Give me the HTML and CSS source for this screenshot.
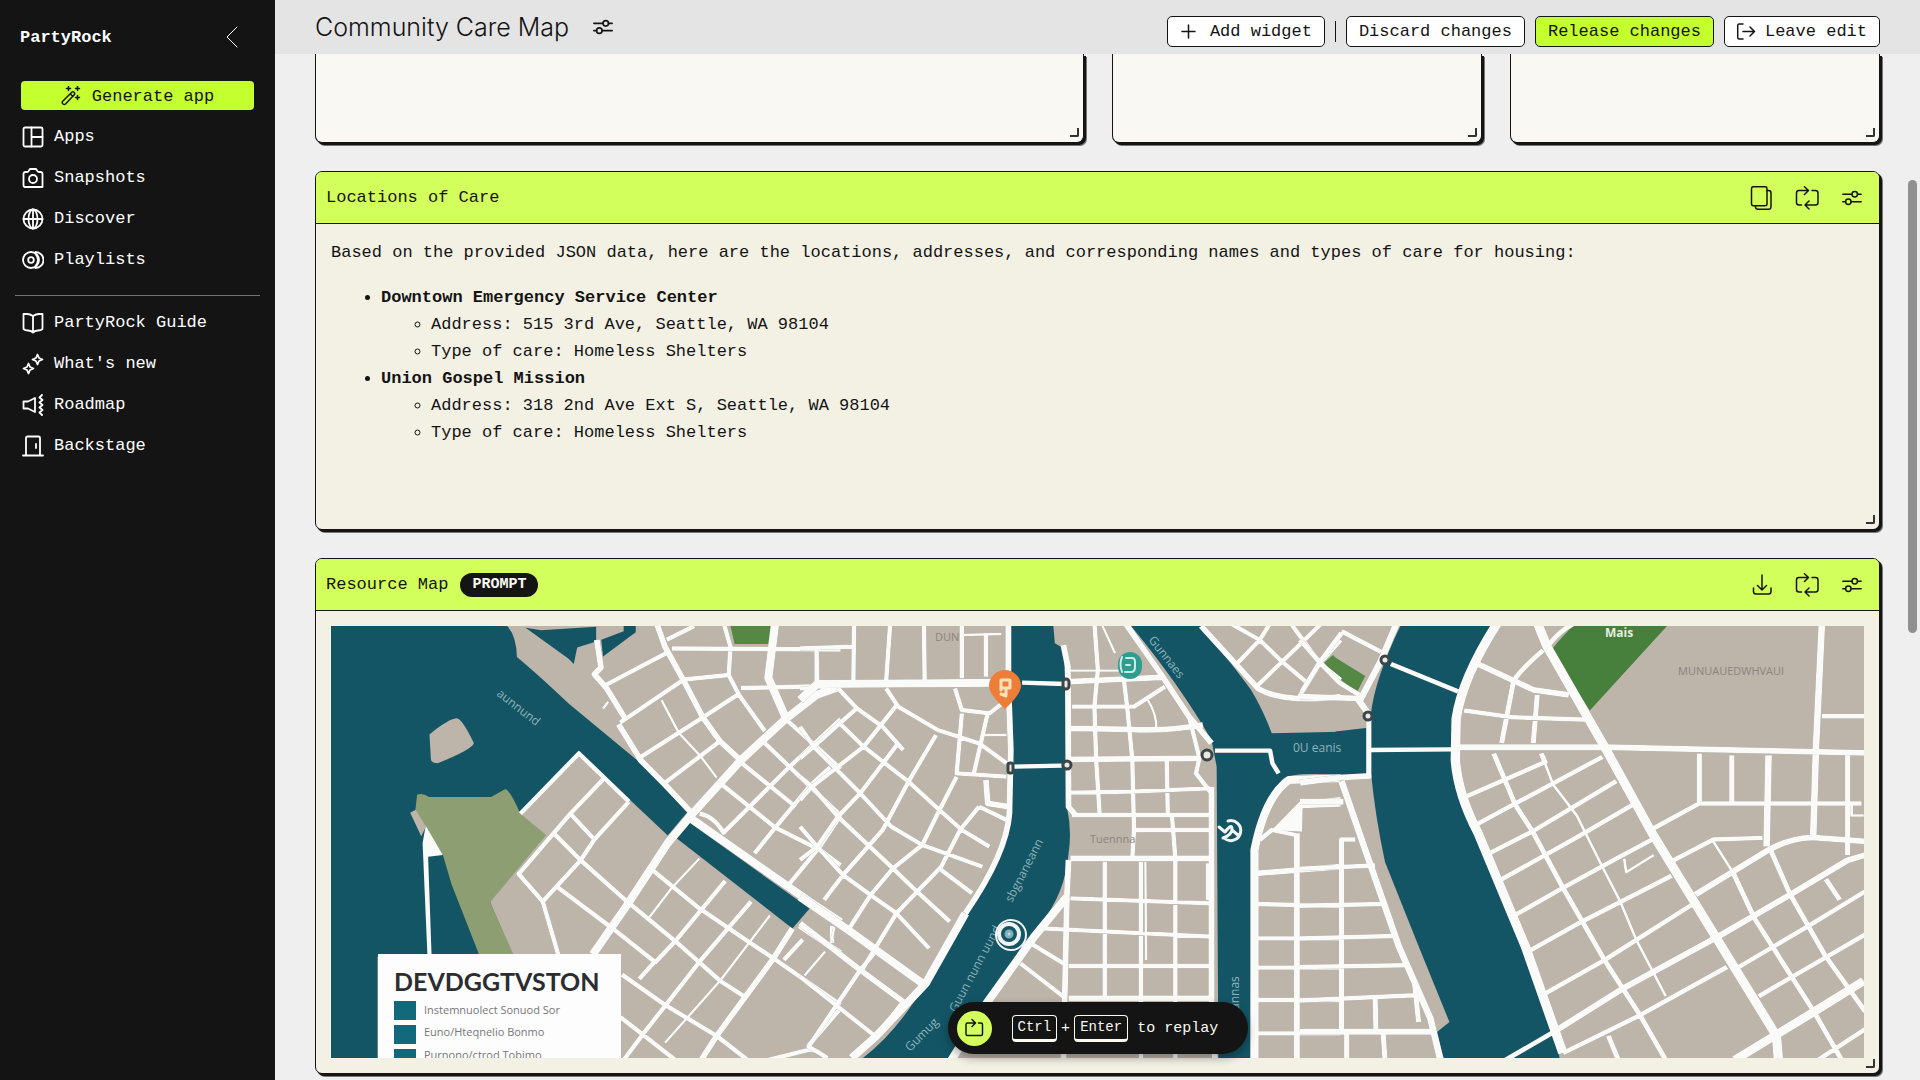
FILE: index.html
```html
<!DOCTYPE html>
<html lang="en">
<head>
<meta charset="utf-8">
<meta name="viewport" content="width=device-width, initial-scale=1">
<title>Community Care Map - PartyRock</title>
<link rel="stylesheet" href="styles.css">
</head>
<body>
<svg class="sprite" aria-hidden="true">
  <symbol id="i-sliders" viewBox="0 0 24 24"><path d="M2 8h10M18 8h4M2 16h3M11 16h11"/><circle cx="15" cy="8" r="3"/><circle cx="8" cy="16" r="3"/></symbol>
  <symbol id="i-replay" viewBox="0 0 24 24"><path d="M13 4.500H4Q1.500 4.500 1.500 7V16.500Q1.500 19 4 19H6.500M17 4.500H20.500Q23 4.500 23 7V16.500Q23 19 20.500 19H11M9.500 .7L13.500 4.500L9.500 8.500M14 15L10 19L14 23"/></symbol>
</svg>
<div class="app">
  <aside class="sidebar">
    <div class="brand">
      <span class="logo">PartyRock</span>
      <button class="icon-button" aria-label="Collapse sidebar"><svg class="chevron" viewBox="0 0 12 22"><path d="M11 1L1 11L11 21"/></svg></button>
    </div>
    <button class="generate">
      <svg class="icon-m" viewBox="0 0 20 20"><path d="M1.500 15.500L11 6Q12 5.300 13 6.200T13.500 8.500L4.500 18Q3.300 19 2 18T1.500 15.500ZM9.500 8L12 10.500M7.500 .5v4M5.500 2.500h4M16.500 .5v4M14.500 2.500h4M16.500 9.500v4M14.500 11.500h4"/></svg>
      Generate app
    </button>
    <nav aria-label="Main">
      <ul class="nav">
        <li><a href="#"><svg class="icon-l" viewBox="0 0 22 22"><rect x="1.500" y="1.500" width="19" height="19" rx="1.500"/><path d="M9.500 1.500v19M9.500 11h11"/></svg>Apps</a></li>
        <li><a href="#"><svg class="icon-l" viewBox="0 0 22 22"><path d="M1.500 7Q1.500 5 3.500 5H5Q6.500 5 7 3.500T8.500 2H13.500Q14.500 2 15 3.500T17 5H18.500Q20.500 5 20.500 7V20H3Q1.500 20 1.500 18Z"/><circle cx="11" cy="12" r="4"/></svg>Snapshots</a></li>
        <li><a href="#"><svg class="icon-l" viewBox="0 0 22 22"><circle cx="11" cy="11" r="9.500"/><ellipse cx="11" cy="11" rx="4.500" ry="9.500"/><path d="M11 1.500v19M1.500 11h19"/></svg>Discover</a></li>
        <li><a href="#"><svg class="icon-l" viewBox="0 0 22 22"><circle cx="9" cy="11" r="8"/><circle cx="9" cy="11" r="2.800"/><path d="M13.500 3a8 8 0 0 1 0 16M13.500 5Q18.500 11 13.500 17"/></svg>Playlists</a></li>
      </ul>
      <hr>
      <ul class="nav">
        <li><a href="#"><svg class="icon-l" viewBox="0 0 22 22"><path d="M11 4Q8 2 5 2H1.500V17Q3 18.500 6 18.500T11 20.500Q13 18.500 16 18.500T20.500 17V2H17Q14 2 11 4V20"/></svg>PartyRock Guide</a></li>
        <li><a href="#"><svg class="icon-l" viewBox="0 0 22 22"><path d="M15.500 1.500L17 5L20.500 6.500L17 8L15.500 11.500L14 8L10.500 6.500L14 5ZM6.500 10.500L8 14L11.500 15.500L8 17L6.500 20.500L5 17L1.500 15.500L5 14Z"/></svg>What's new</a></li>
        <li><a href="#"><svg class="icon-l" viewBox="0 0 22 22"><path d="M1.500 7.500H6L13 4V18L6 14.500H1.500ZM20 1L17.500 3.500L20.500 6L17.500 8.500L20.500 11L17.500 13.500L20.500 16L17.500 18.500L20 21"/></svg>Roadmap</a></li>
        <li><a href="#"><svg class="icon-l" viewBox="0 0 22 22"><path d="M4 20.500V3Q4 1.500 5.500 1.500H16.500Q18 1.500 18 3V20.500M1 20.500h20M14 9v4"/></svg>Backstage</a></li>
      </ul>
    </nav>
  </aside>

  <div class="content">
    <header class="topbar">
      <div class="title">
        <h1>Community Care Map</h1>
        <button class="icon-button" aria-label="App settings"><svg class="icon-l"><use href="#i-sliders"/></svg></button>
      </div>
      <div class="actions">
        <button class="btn btn-add"><svg class="icon-m" viewBox="0 0 20 20"><path d="M2 9.500h13M8.500 3v13"/></svg>Add widget</button>
        <span class="divider"></span>
        <button class="btn">Discard changes</button>
        <button class="btn btn-primary">Release changes</button>
        <button class="btn"><svg class="icon-m" viewBox="0 0 20 20"><path d="M6 2H2Q0.700 2 .7 4V15Q.7 17 2 17H6M6 9.500h11.500M13 5L17.500 9.500L13 14"/></svg>Leave edit</button>
      </div>
    </header>

    <main class="board">
      <section class="card card-plain card-wide" aria-label="Widget"><span class="grip"></span></section>
      <section class="card card-plain" aria-label="Widget"><span class="grip"></span></section>
      <section class="card card-plain" aria-label="Widget"><span class="grip"></span></section>

      <section class="card card-full card-text">
        <div class="card-head">
          <h2>Locations of Care</h2>
          <div class="tools">
            <button class="icon-button" aria-label="Copy"><svg class="icon-xl" viewBox="0 0 24 24"><rect x="1.500" y=".7" width="15.500" height="19" rx="2"/><path d="M17 4.500H18.500Q21 4.500 21 7V21Q21 23.300 18.500 23.300H8Q5.500 23.300 5.500 21V19.700"/></svg></button>
            <button class="icon-button" aria-label="Replay"><svg class="icon-xl"><use href="#i-replay"/></svg></button>
            <button class="icon-button" aria-label="Edit widget"><svg class="icon-l icon-fine"><use href="#i-sliders"/></svg></button>
          </div>
        </div>
        <div class="card-body">
          <p>Based on the provided JSON data, here are the locations, addresses, and corresponding names and types of care for housing:</p>
          <ul>
            <li><strong>Downtown Emergency Service Center</strong>
              <ul><li>Address: 515 3rd Ave, Seattle, WA 98104</li><li>Type of care: Homeless Shelters</li></ul>
            </li>
            <li><strong>Union Gospel Mission</strong>
              <ul><li>Address: 318 2nd Ave Ext S, Seattle, WA 98104</li><li>Type of care: Homeless Shelters</li></ul>
            </li>
          </ul>
        </div>
        <span class="grip"></span>
      </section>

      <section class="card card-full">
        <div class="card-head">
          <h2>Resource Map</h2><span class="badge">PROMPT</span>
          <div class="tools">
            <button class="icon-button" aria-label="Download"><svg class="icon-xl" viewBox="0 0 24 24"><path d="M12 2v15M7.500 12.500L12 17L16.500 12.500M3.500 15V18.500Q3.500 21 6 21H18.500Q21 21 21 18.500V15"/></svg></button>
            <button class="icon-button" aria-label="Replay"><svg class="icon-xl"><use href="#i-replay"/></svg></button>
            <button class="icon-button" aria-label="Edit widget"><svg class="icon-l icon-fine"><use href="#i-sliders"/></svg></button>
          </div>
        </div>
        <div class="card-body">
          <svg class="map" viewBox="331 626 1533 432" preserveAspectRatio="xMidYMid slice" role="img" aria-label="City resource map">
            <rect class="land" x="331" y="626" width="1533" height="432"/>
            <!-- water and parks -->
            <g transform="translate(300 540) scale(.34435)">
              <path class="water" d="M80 240H590Q628 265 630 340Q690 390 780 475L980 640L1125 790L1068 858L810 615L640 795L552 1052L620 1210H225V1510H80ZM655 255L700 262L860 252V295L805 312L795 360L780 345ZM875 290L940 265V240H975V268L880 338ZM1130 820L1480 1070L1430 1128L1088 862Z"/>
              <path class="land" d="M376 565Q430 520 455 518Q470 518 505 590Q500 608 400 648Q380 648 380 635Z"/>
              <path class="meadow" d="M340 740Q355 733 375 746H555L595 724Q608 722 640 795L715 857L552 1052L620 1204H520L440 1000L415 915L335 785Z"/>
              <path class="pale" d="M365 830L415 915L372 920L382 1204H370L356 880Z"/>
              <path class="land" d="M320 792L336 783L366 832L352 860Z"/>
              <path class="park" d="M1248 240H1370L1365 302H1262Z"/>
            </g>
            <g transform="translate(800 600) scale(.34435 .33333)">
              <path class="water" d="M605 70H735L740 130L765 145L778 400L775 620Q790 690 780 760Q770 880 700 970L630 1070L440 1380H175Q280 1300 365 1150L480 940Q600 760 608 680L612 450ZM955 70H1160Q1260 200 1310 270Q1345 330 1370 400L1570 395V525Q1420 515 1400 540Q1320 640 1312 760L1308 1380H1215L1210 500L1195 420Q1100 250 955 70Z"/>
              <path class="park" d="M1522 188L1548 165L1568 190V245Z"/>
            </g>
            <g transform="translate(1300 540) scale(.3954 .34435)">
              <path class="water" d="M258 240H486Q400 400 385 520L383 640Q390 720 440 850L560 1180L650 1450L657 1510H365L345 1430L378 1400L300 1180L215 935Q190 800 180 680L172 690L90 686V556L172 545L180 500Q190 400 258 240Z"/>
              <path class="park" d="M85 338L165 395L145 440Q100 410 65 360Z"/>
              <path class="forest" d="M635 320Q670 270 700 240H936L733 495Z"/>
            </g>
            <!-- streets -->
            <g class="roads" transform="translate(300 540) scale(.34435)">
              <path class="r3" d="M1380 240L1360 400L1410 515M1570 425L1500 450L1410 520L1280 640L1135 800L1068 880L950 1060L850 1204M1130 805L1480 1050L1570 1110"/>
              <path class="r2" d="M1035 240L1060 310L1115 410L1170 515L1220 585L1280 640M862 290L874 370L855 390L890 430L945 520M925 535L990 640L1060 710L1135 790M1430 1128L1375 1215L1210 1440L1165 1510M1450 1120L1570 1200"/>
              <path class="r1" d="M890 420L1070 325M1080 315L1570 318M1065 290L1145 250M930 530L1115 405L1245 392L1275 450L1350 555M990 630L1170 515L1270 450M1060 705L1225 580M1230 240L1250 310L1245 395M1280 430L1500 425L1570 430M1500 320V425M1410 520L1500 600L1570 665M1350 590L1480 715L1570 800M1285 650L1440 775M1225 710L1380 835L1510 900L1570 945M1160 795Q1200 800 1230 850L1300 780L1420 660L1570 520M1320 910L1380 835L1480 715L1540 660M1420 1000L1510 890L1570 800M640 795L810 620L955 760M885 690L785 795L635 970L705 1050L750 1204M955 760L855 870L815 930L705 1050M785 795L855 870M740 855L815 930L950 1050L1090 1165L1220 1280L1290 1325M750 1010L910 1130L1030 1225L985 1275M1235 990L1090 1165L1030 1228M1310 1050L1160 1225L1000 1430L940 1510M1025 960L1160 1070L1300 1165L1375 1215L1570 1350M935 1262L1060 1350L1210 1440L1300 1510M930 1385L1090 1510M1545 1120V1170M1460 1160L1405 1220M1570 1360L1475 1470M1360 1510L1480 1480Q1510 1480 1530 1510"/>
              <path class="r0" d="M1050 465L1100 560L1165 630L1210 690M1160 925L1080 1010L1015 1095M1365 1090L1220 1280L1060 1460M1525 1195L1465 1265M895 470L880 490"/>
            </g>
            <g class="roads" transform="translate(800 600) scale(.34435 .33333)">
              <path class="pale" d="M1370 690L1450 605L1570 590V620L1460 625L1458 695Z"/>
              <path class="r3" d="M0 300L50 252L600 248M0 890L140 990L355 1150M480 940L365 1150L220 1310L150 1374M775 890L680 1010L545 1205L440 1380M1320 1380V750Q1350 590 1420 540L1570 535"/>
              <path class="r2" d="M605 70V250L612 450L608 640Q600 760 480 940M765 135L778 200L780 620L800 645M780 780L775 890L765 1380M0 970L175 1110L300 1205M780 245L1050 232M780 385L960 388Q1050 395 1170 375M780 478L1160 475M785 775H1195M780 1195H1200M1195 560V1200L1205 1380M945 70L1050 225L1130 350L1195 430M1165 78L1330 265Q1400 310 1570 290M540 540L545 610L605 620M1325 820L1570 800M1443 700V1380"/>
              <path class="r1" d="M0 145L150 140M157 70L155 245M262 70L250 245M360 70L362 245M470 70V235M540 100V230M48 150L50 245M0 265H50M645 248L770 252M620 500L760 497M0 380L40 440L175 580L265 680L355 735L530 800M115 370L185 440L315 545L405 630L470 690L550 740M110 265L165 325L240 380L300 450M0 530L35 560L110 650L270 805L340 875L435 965M0 680L50 740L125 825L205 885L280 940L375 1045M250 265L285 320L400 390L520 430L600 490M0 475L40 440L115 370L165 325M0 600L35 560L185 440L285 310M0 780L50 740L110 650L175 580L285 430M70 900L125 825L240 690L315 545L395 405M140 990L205 885L270 805L355 735L405 630L455 530M180 1110L280 940L340 875L410 800L465 690L520 620M450 265L470 330L550 340L600 300M470 340L455 520L600 530M545 340L505 520M520 620L600 660M410 810L500 880M0 1130L220 1310L300 1205M175 1110L215 1060M175 1110L25 1340L80 1374M790 320H970L1060 260M785 578L960 575L1190 565M790 645H1195M965 690H1195M785 895L1195 910M700 985L1195 1010M780 1098H1195M855 70L865 210L855 320L860 478L870 640M940 235L950 320L965 478L970 690L965 775M885 785V1195M990 785V1380M1080 645L1090 775V1380M1065 478L1068 640M1185 790V900M1130 350L1160 475L1150 520L1195 580M640 1090L765 1190M670 1030L765 1090M1205 452H1365L1372 490L1390 520M1335 720L1370 690L1440 705M1325 912L1570 918M1325 1015H1570M1325 1103H1570M1325 1200H1570M1325 1300H1570M1250 70L1335 120L1400 185L1475 250M1365 70L1335 120L1270 190M1425 70L1510 190L1570 240M1515 70L1400 185L1325 260M1570 120L1510 190L1450 290"/>
              <path class="r0" d="M470 105L585 102M535 405H600M785 212H930M1010 300Q1035 340 1035 385M875 70L915 160M1003 785L1005 1080M100 980L90 1030"/>
            </g>
            <g class="roads" transform="translate(1300 540) scale(.3954 .34435)">
              <path class="r3" d="M600 240L625 310L770 600L890 850L1050 1150L1205 1440L1210 1510M500 240Q410 400 395 520L393 640Q400 740 450 850L570 1180L665 1490M1100 1510L1300 1370L1426 1280"/>
              <path class="r2" d="M105 700L165 900L250 1180L330 1390L355 1510M245 240L205 350L150 470M0 455L145 460L170 500M0 705L100 690L180 685M0 760H110M450 360L590 435L680 450M400 602H780L1430 618M640 1430L820 1300L1060 1150L1240 1030L1385 930L1430 915M1185 625L1180 890M1320 240L1305 600L1298 860M1000 1030L1185 900Q1250 860 1310 865L1430 875M0 1428H345"/>
              <path class="r1" d="M230 360L400 440M175 610L385 608M174 520V690M520 1510L640 1430M105 265L205 325M0 290L50 355L100 415L150 450M105 270L50 355L5 440M0 955L190 945M0 1062L210 1057M0 1157L235 1150M0 1240L265 1235M0 1337L290 1322M105 1428V870H140M190 1325L192 1428M290 1290L300 1400M118 1428V1510M210 1428L215 1510M625 310Q660 260 690 245M615 320Q555 380 540 410L510 590M415 495L540 515L730 522M600 450L590 590M490 620L545 770L590 850L665 1010L770 1220L860 1380L925 1510M410 750L620 645L610 620M440 830L545 765L765 630M470 915L590 845L800 700M495 995L690 870L840 770M535 1095L665 1010L800 925L890 870M570 1200L710 1110L940 975M615 1320L770 1220L990 1060M665 1490L860 1380L1080 1240M890 840L1010 765H1420M1010 620V765M1092 625V765M1385 625V915M1320 512H1430M945 930L1045 870L1170 865M1110 1240L1280 1125L1430 1020M1160 1325L1430 1145M1190 900L1240 1030L1330 1210L1430 1370M1095 965L1150 1100L1300 1370L1370 1510M1310 1510L1430 1420M780 1440L805 1510M1330 985L1365 1045"/>
              <path class="r0" d="M610 620L640 710L700 800L765 950L810 1050L850 1160L925 1325M1045 875L1095 965M820 925L825 965L895 915M1420 765H1395V800H1426"/>
            </g>
            <!-- place names -->
            <g class="names">
              <text transform="translate(496 695) rotate(38)">aunnund</text>
              <text transform="translate(956 1013) rotate(-62)">Guun nunn uund</text>
              <text transform="translate(1012 903) rotate(-63)">sbgnaneann</text>
              <text transform="translate(910 1052) rotate(-45)">Gumug</text>
              <text transform="translate(1148 640) rotate(52)">Gunnaes</text>
              <text x="1293" y="752">0U eanis</text>
              <text transform="translate(1239 1010) rotate(-90)">annas</text>
              <text x="1605" y="637" class="bright">Mais</text>
              <text x="1678" y="675" class="dim">MUNUAUEDWHVAUI</text>
              <text x="1090" y="843" class="dim">Tuennna</text>
              <text x="935" y="641" class="dim">DUN</text>
            </g>
            <!-- markers -->
            <path fill="#ee7d38" d="M1005 709Q989 694 989 686A16 16 0 1 1 1021 686Q1021 694 1005 709Z"/>
            <path fill="none" stroke="#fbe2bd" stroke-width="3" d="M1001 694L1006 696V690M1001 690V680H1010V688H1002"/>
            <rect x="1118" y="652" width="24" height="27" rx="12" fill="#2e9c91"/>
            <path fill="none" stroke="#c9ece4" stroke-width="2" d="M1126 658H1132Q1135 658 1135 662V667Q1135 672 1131 672H1125M1126 665H1130M1122 657Q1119 664 1122 672"/>
            <g fill="#e9e9e5" stroke="#3c4548" stroke-width="3">
              <rect x="1063" y="679" width="6" height="10" rx="3"/><rect x="1008" y="763" width="5" height="10" rx="2"/><circle cx="1067" cy="765" r="4"/><circle cx="1207" cy="755" r="5"/><circle cx="1385" cy="660" r="4"/><circle cx="1368" cy="716" r="4"/>
            </g>
            <g fill="none" stroke="#f1f4f3" stroke-width="3">
              <path d="M1228 821A10 10 0 1 1 1224 838M1219 827L1225 832Q1232 823 1232 829T1223 838M1232 830L1239 836"/>
              <circle cx="1011" cy="935" r="15" stroke-width="2"/><circle cx="1009" cy="934" r="10" stroke-width="4"/><circle cx="1009" cy="934" r="3" fill="#b9d9df" stroke="#7fb0ba"/>
            </g>
            <!-- legend -->
            <rect class="legend" x="378" y="954" width="243" height="110"/>
            <path fill="#14687b" d="M394 1001h22v19h-22zM394 1025h22v19h-22zM394 1049h22v19h-22z"/>
            <text class="legend-title" x="394" y="991">DEVDGGTVSTON</text>
            <g class="legend-text"><text x="424" y="1014">Instemnuolect Sonuod Sor</text><text x="424" y="1036">Euno/Hteqnelio Bonmo</text><text x="424" y="1059">Purnono/ctrod Tobimo</text></g>
          </svg>
        </div>
        <span class="grip"></span>
      </section>
    </main>

    <div class="toast" role="status">
      <span class="toast-icon"><svg class="icon-m" viewBox="0 0 20 20"><path d="M11 5H3.500Q2 5 2 6.500V16Q2 17.500 3.500 17.500H17Q18.500 17.500 18.500 16V6.500Q18.500 5 17 5H14.500M8 1.500L11.500 5L8 8.500"/></svg></span>
      <span class="keys"><kbd>Ctrl</kbd>+<kbd>Enter</kbd></span>
      <span>to replay</span>
    </div>
  </div>
  <div class="scroll-thumb" aria-hidden="true"></div>
</div>
</body>
</html>
```
FILE: styles.css
```css
:root {
  --ink: #141414;
  --lime: #c4ff2e;
  --lime-soft: #d2ff5c;
  --mono: "Liberation Mono", "Courier New", monospace;
}

* { box-sizing: border-box; }

body {
  margin: 0;
  background: #efefef;
  color: var(--ink);
  font: 17px/27px var(--mono);
}

h1, h2, p, ul { margin: 0; }
button { font: inherit; color: inherit; cursor: pointer; }

svg { fill: none; stroke: currentColor; stroke-linecap: round; stroke-linejoin: round; }
.sprite { position: absolute; width: 0; height: 0; }
.icon-m { width: 20px; height: 20px; stroke-width: 1.5; }
.icon-l { width: 22px; height: 22px; stroke-width: 1.8; }
.icon-xl { width: 24px; height: 24px; stroke-width: 1.5; }
.icon-fine { stroke-width: 1.6; }

.icon-button {
  display: flex;
  align-items: center;
  justify-content: center;
  min-width: 24px;
  padding: 0;
  border: 0;
  background: none;
}

.app { display: flex; min-height: 100vh; overflow: hidden; position: relative; }

/* Sidebar */
.sidebar {
  flex: 0 0 275px;
  background: var(--ink);
  color: #fff;
}
.brand {
  display: flex;
  align-items: center;
  justify-content: space-between;
  height: 81px;
  padding: 0 31px 7px 20px;
}
.logo { font-weight: 700; }
.chevron { width: 12px; height: 22px; stroke-width: 1; }
.generate {
  display: flex;
  align-items: center;
  justify-content: center;
  gap: 11px;
  width: 233px;
  height: 29px;
  margin: 0 21px 6px;
  padding: 1px 0 0;
  border: 0;
  border-radius: 4px;
  background: var(--lime);
  color: var(--ink);
}
.nav { padding: 0; list-style: none; }
.nav a {
  display: flex;
  align-items: center;
  gap: 10px;
  height: 41px;
  padding-left: 22px;
  color: #fff;
  text-decoration: none;
}
.sidebar hr {
  height: 1px;
  margin: 15px 15px 6px;
  border: 0;
  background: #747474;
}

/* Top bar */
.content { flex: 1; min-width: 0; position: relative; }
.topbar {
  display: flex;
  justify-content: space-between;
  height: 54px;
  padding: 0 40px;
  background: #e4e4e4;
}
.title { display: flex; align-items: center; gap: 22px; height: 54px; }
.title h1 { font: 300 25px/54px Inter, "Open Sans", sans-serif; }
.actions { display: flex; align-items: center; gap: 10px; padding-top: 8px; }
.btn {
  display: flex;
  align-items: center;
  gap: 8px;
  height: 31px;
  padding: 1px 12px 0;
  border: 1px solid var(--ink);
  border-radius: 5px;
  background: #fff;
}
.btn-add { gap: 10px; }
.btn-primary { background: var(--lime); }
.divider { width: 1px; height: 21px; background: var(--ink); }

/* Widget board */
.board {
  display: grid;
  grid-template-columns: repeat(4, 1fr);
  gap: 28px;
  padding: 0 40px 7px;
}
.card {
  position: relative;
  border: 1px solid var(--ink);
  border-radius: 7px;
  background: #f3f0e4;
  box-shadow: 2px 2px 0 var(--ink), 3px 3px 0 #777;
}
.card-plain {
  height: 89px;
  border-top: 0;
  border-radius: 0 0 7px 7px;
  background: #f9f8f2;
}
.card-wide { grid-column: span 2; }
.card-full { grid-column: 1 / -1; }
.card-text { min-height: 359px; }
.card-head {
  display: flex;
  align-items: center;
  gap: 12px;
  height: 52px;
  padding: 0 15px 0 10px;
  border-bottom: 1px solid var(--ink);
  border-radius: 6px 6px 0 0;
  background: var(--lime-soft);
}
.card-head h2 { font-size: 17px; font-weight: 400; }
.tools { display: flex; gap: 21px; margin-left: auto; }
.badge {
  height: 24px;
  padding: 0 12px;
  border-radius: 12px;
  background: var(--ink);
  color: #fafaf0;
  font-size: 15px;
  font-weight: 700;
  line-height: 24px;
}
.card-body { padding: 15px; }
.card-body ul { padding-left: 50px; }
.card-body p + ul { margin-top: 18px; }
.grip {
  position: absolute;
  right: 4px;
  bottom: 5px;
  width: 9px;
  height: 9px;
  border: solid #333;
  border-width: 0 2px 2px 0;
  border-bottom-right-radius: 2px;
}

/* Map */
.map { display: block; width: 100%; height: 432px; stroke: none; }
.land { fill: #bdb4aa; }
.water { fill: #135565; }
.meadow { fill: #8d9f72; }
.park { fill: #558845; }
.forest { fill: #47803c; }
.pale { fill: #fafaf8; stroke: none; }
.roads { stroke: #fafaf8; filter: drop-shadow(0 0 2px #5b5b5b99); }
.roads path { stroke-linecap: butt; }
.r0 { stroke-width: 7; }
.r1 { stroke-width: 13; }
.r2 { stroke-width: 17; }
.r3 { stroke-width: 24; }
.names { fill: #8fb3bb; font: 12px "Open Sans", sans-serif; }
.names .bright { fill: #e3efdc; font-weight: 700; }
.names .dim { fill: #8d857d; font-size: 11px; }
.legend { fill: #fdfdfd; }
.legend-title { fill: #2c2d31; font: 700 25px Lato, sans-serif; }
.legend-text { fill: #77777a; font: 11px "Open Sans", sans-serif; }

/* Replay hint */
.toast {
  position: absolute;
  left: 50%;
  bottom: 27px;
  display: flex;
  align-items: center;
  gap: 9px;
  width: 300px;
  height: 52px;
  padding: 0 9px;
  border-radius: 26px;
  background: var(--ink);
  color: #fafaf0;
  font-size: 15px;
  transform: translateX(-50%);
  box-shadow: 0 4px 10px #0005;
}
.toast-icon {
  display: grid;
  place-items: center;
  width: 35px;
  height: 35px;
  margin-right: 11px;
  border-radius: 50%;
  background: var(--lime-soft);
  color: var(--ink);
}
.keys { display: flex; align-items: center; gap: 4px; }
.toast kbd {
  height: 27px;
  padding: 0 5px;
  border: 1px solid #fafaf0;
  border-bottom-width: 3px;
  border-radius: 4px;
  font: 14px/23px var(--mono);
}

.scroll-thumb {
  position: absolute;
  top: 180px;
  right: 3px;
  width: 9px;
  height: 453px;
  border-radius: 5px;
  background: #909090;
}
```
